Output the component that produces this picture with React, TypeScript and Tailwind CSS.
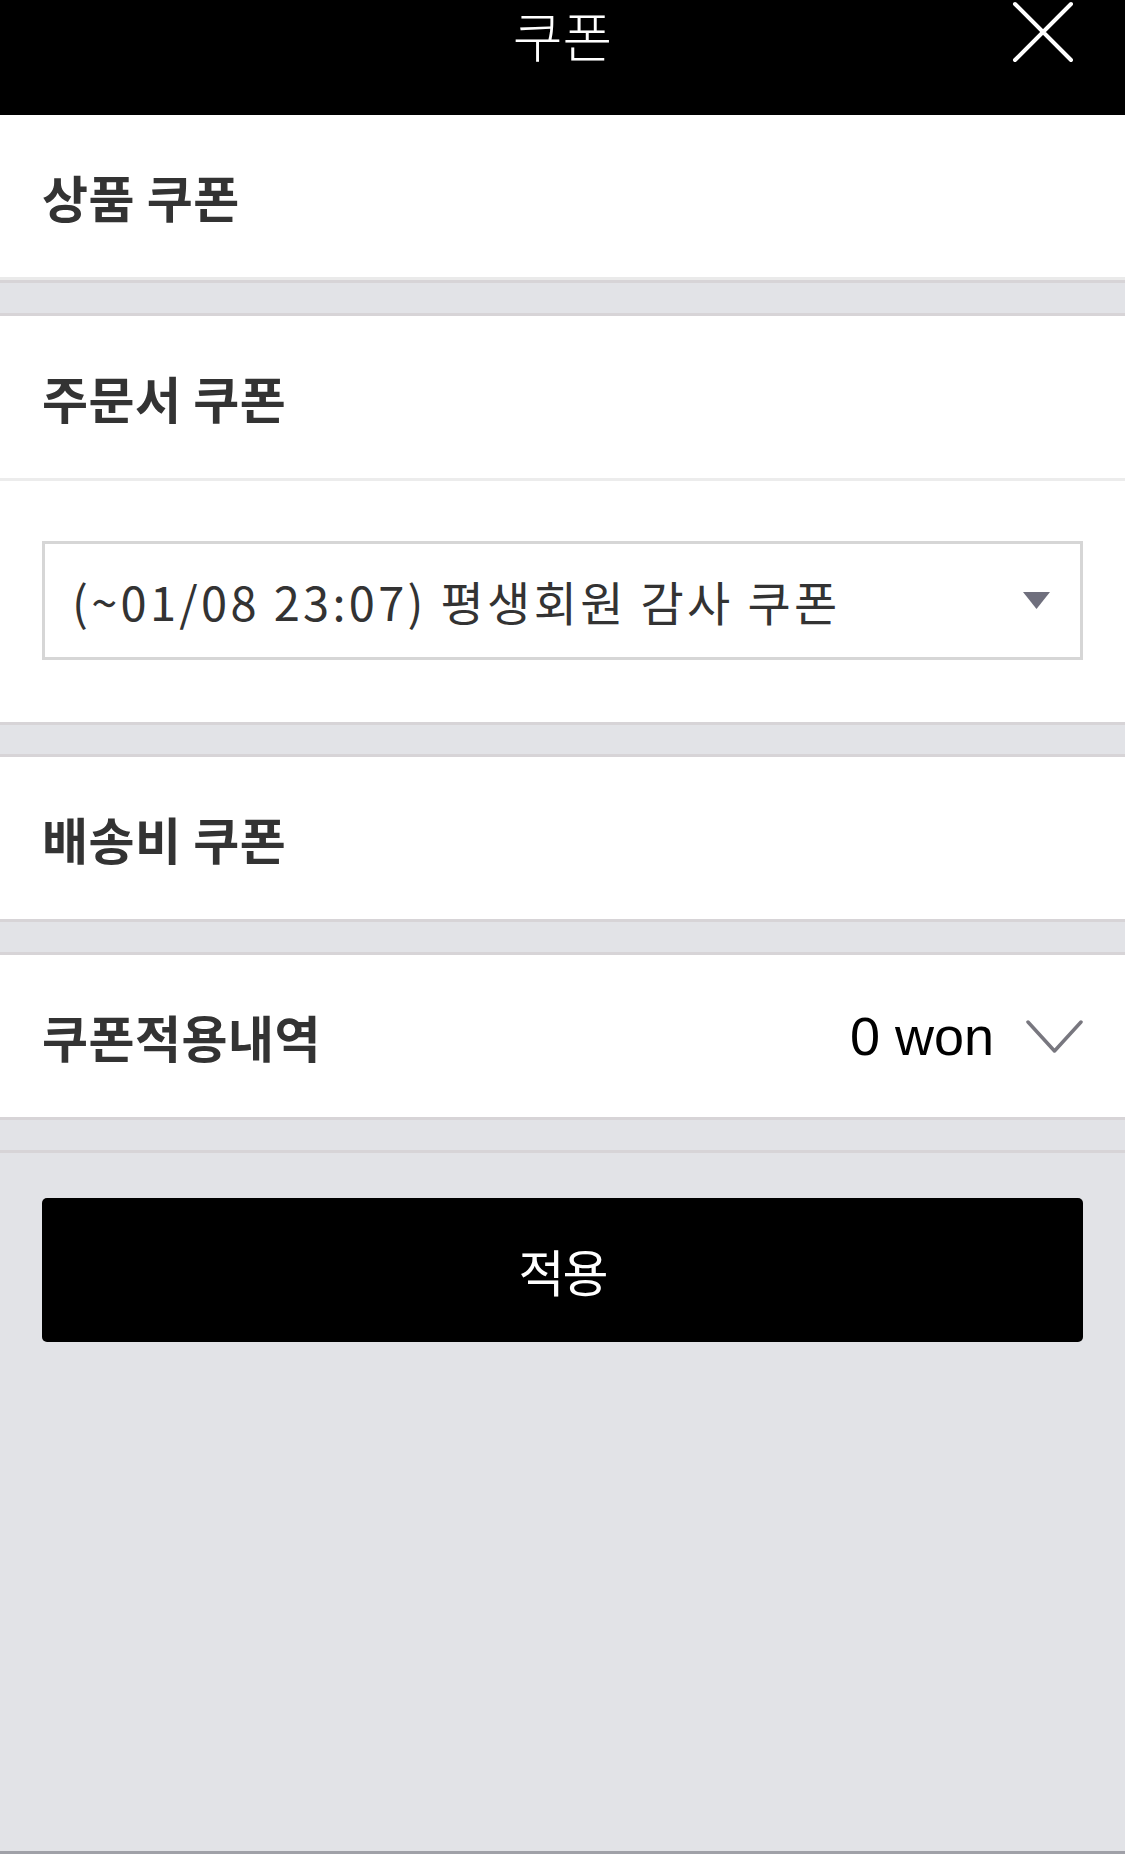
const ko = { fontFamily: '"Noto Sans CJK KR", "Noto Sans", sans-serif' };

function Band({ h }: { h: string }) {
    return <div className={`${h} bg-[#e2e3e7] border-y-[3px] border-[#d7d4d7]`} />;
}

function Label({ text }: { text: string }) {
    return (
        <p className="text-[50px] font-bold tracking-[0.5px] text-[#333333] leading-none" style={ko}>
            {text}
        </p>
    );
}

export default function App() {
    return (
        <div className="w-[1125px] min-h-[1854px] flex flex-col bg-[#e2e3e7]" style={ko}>
            <header className="relative h-[115px] bg-black flex justify-center">
                <h1 className="mt-[8px] text-[54px] font-light tracking-[0px] text-white leading-none">
                    쿠폰
                </h1>
                <button className="absolute right-[50px] top-[0px] w-[64px] h-[64px] flex items-center justify-center">
                    <svg width="64" height="64" viewBox="0 0 64 64" fill="none">
                        <path d="M4 4 L60 60 M60 4 L4 60" stroke="white" strokeWidth="4" strokeLinecap="round" />
                    </svg>
                </button>
            </header>

            <section className="h-[165px] bg-white border-b-[3px] border-[#eaeaea] flex items-center px-[42px]">
                <Label text="상품 쿠폰" />
            </section>
            <Band h="h-[36px]" />

            <section className="bg-white">
                <div className="h-[165px] flex items-center px-[42px] border-b-[3px] border-[#ececec]">
                    <Label text="주문서 쿠폰" />
                </div>
                <div className="px-[42px] pt-[60px] pb-[62px]">
                    <div className="h-[119px] border-[3px] border-[#d6d6d6] flex items-center justify-between pl-[27px] pr-[30px]">
                        <span className="text-[47px] text-[#333333] leading-none tracking-[3.3px]">
                            (~01/08 23:07) 평생회원 감사 쿠폰
                        </span>
                        <svg width="27" height="17" viewBox="0 0 27 17">
                            <polygon points="0,0 27,0 13.5,17" fill="#6f6f7d" />
                        </svg>
                    </div>
                </div>
            </section>
            <Band h="h-[35px]" />

            <section className="h-[162px] bg-white flex items-center px-[42px]">
                <Label text="배송비 쿠폰" />
            </section>
            <Band h="h-[36px]" />

            <section className="h-[162px] bg-white flex items-center justify-between pl-[42px] pr-[42px]">
                <Label text="쿠폰적용내역" />
                <div className="flex items-center gap-[32px]">
                    <span className="text-[54px] text-black leading-none" style={{ fontFamily: '"Liberation Sans", Arial, sans-serif' }}>
                        0 won
                    </span>
                    <svg width="57" height="33" viewBox="0 0 57 33" fill="none">
                        <path d="M2 2 L28.5 31 L55 2" stroke="#78777f" strokeWidth="3.5" strokeLinecap="round" strokeLinejoin="round" />
                    </svg>
                </div>
            </section>

            <div className="h-[36px] bg-[#e2e3e7] border-y-[3px] border-[#d7d4d7]" />

            <div className="flex-1 flex flex-col bg-[#e2e3e7] border-b-[3px] border-[#a0a1a8]">
                <div className="px-[42px] pt-[45px]">
                    <button className="w-full h-[144px] bg-black rounded-[5px] text-white text-[50px] tracking-[-2px] leading-none">
                        적용
                    </button>
                </div>
            </div>
        </div>
    );
}
